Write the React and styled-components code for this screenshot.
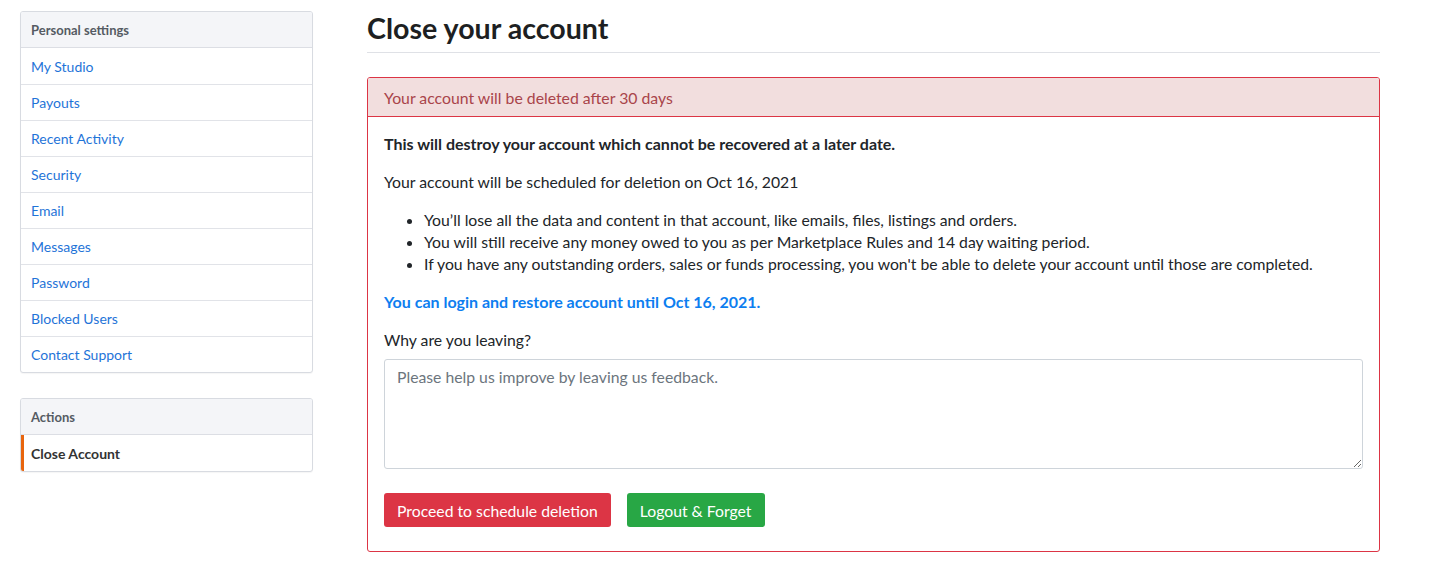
import React from "react";
import styled, { createGlobalStyle } from "styled-components";

const Global = createGlobalStyle`
  html, body { margin: 0; padding: 0; background: #fff; }
  body { font-family: Lato, "Open Sans", Arial, sans-serif; color: #212529; }
  * { box-sizing: border-box; }
`;

const Page = styled.div`
  display: flex;
  align-items: flex-start;
  padding: 11px 0 0 20px;
  gap: 54px;
`;

const Sidebar = styled.aside`
  width: 293px;
  display: flex;
  flex-direction: column;
  gap: 25px;
  flex-shrink: 0;
`;

const NavCard = styled.div`
  border: 1px solid #d8dbe1;
  border-radius: 3px;
  background: #fff;
  overflow: hidden;
  box-shadow: 0 1px 1px rgba(0,0,0,0.04);
`;

const NavHeader = styled.div`
  height: 36px;
  display: flex;
  align-items: center;
  padding: 0 10px;
  background: #f4f5f8;
  border-bottom: 1px solid #dcdee4;
  font-size: 13px;
  font-weight: 700;
  color: #555b63;
`;

const NavItem = styled.a`
  display: flex;
  align-items: center;
  height: 36px;
  padding: 0 10px;
  font-size: 14px;
  text-decoration: none;
  color: ${p => (p.$active ? "#333" : "#1f74d8")};
  font-weight: ${p => (p.$active ? 700 : 400)};
  border-left: ${p => (p.$active ? "3px solid #e8650e" : "0")};
  padding-left: ${p => (p.$active ? "7px" : "10px")};
  & + & { border-top: 1px solid #e1e3e8; }
`;

const Main = styled.main`
  width: 1013px;
`;

const Title = styled.h1`
  margin: 0;
  font-size: 28.6px;
  font-weight: 700;
  line-height: 34px;
  color: #1d1f22;
  padding-bottom: 7px;
  border-bottom: 1px solid #dfe1e6;
`;

const AlertCard = styled.section`
  margin-top: 24px;
  border: 1px solid #dc3545;
  border-radius: 3px;
  overflow: hidden;
`;

const AlertHeader = styled.div`
  height: 39px;
  display: flex;
  align-items: center;
  padding: 0 16px;
  background: #f2dede;
  border-bottom: 1px solid #dc3545;
  color: #a9444a;
  font-size: 15.8px;
`;

const AlertBody = styled.div`
  padding: 16px 16px 24px;
  font-size: 15.75px;
  line-height: 22px;
  color: #212529;
`;

const Para = styled.p`
  margin: 0 0 16px;
  font-size: ${p => (p.$bold ? "16px" : "inherit")};
  font-weight: ${p => (p.$bold ? 700 : 400)};
  color: ${p => (p.$tone === "link" ? "#0d7ef0" : "inherit")};
`;

const List = styled.ul`
  margin: 0 0 16px;
  padding-left: 40px;
`;

const Label = styled.label`
  display: block;
  margin-bottom: 8px;
`;

const Feedback = styled.textarea`
  display: block;
  width: 100%;
  height: 110px;
  padding: 6px 12px;
  border: 1px solid #ced4da;
  border-radius: 3px;
  font-family: inherit;
  font-size: 15.75px;
  line-height: 22px;
  color: #495057;
  resize: vertical;
  &::placeholder { color: #6c757d; }
`;

const Actions = styled.div`
  display: flex;
  gap: 16px;
  margin-top: 24px;
`;

const Button = styled.button`
  height: 34px;
  padding: 0 13px;
  border: 0;
  border-radius: 3px;
  font-family: inherit;
  font-size: 15.75px;
  color: #fff;
  background: ${p => (p.$variant === "danger" ? "#dc3545" : "#28a745")};
  cursor: pointer;
`;

const personal = [
  "My Studio",
  "Payouts",
  "Recent Activity",
  "Security",
  "Email",
  "Messages",
  "Password",
  "Blocked Users",
  "Contact Support",
];

export default function App() {
  return (
    <>
      <Global />
      <Page>
        <Sidebar>
          <NavCard>
            <NavHeader>Personal settings</NavHeader>
            {personal.map(item => (
              <NavItem key={item} href="#">{item}</NavItem>
            ))}
          </NavCard>
          <NavCard>
            <NavHeader>Actions</NavHeader>
            <NavItem href="#" $active>Close Account</NavItem>
          </NavCard>
        </Sidebar>
        <Main>
          <Title>Close your account</Title>
          <AlertCard>
            <AlertHeader>Your account will be deleted after 30 days</AlertHeader>
            <AlertBody>
              <Para $bold>This will destroy your account which cannot be recovered at a later date.</Para>
              <Para>Your account will be scheduled for deletion on Oct 16, 2021</Para>
              <List>
                <li>You’ll lose all the data and content in that account, like emails, files, listings and orders.</li>
                <li>You will still receive any money owed to you as per Marketplace Rules and 14 day waiting period.</li>
                <li>If you have any outstanding orders, sales or funds processing, you won't be able to delete your account until those are completed.</li>
              </List>
              <Para $bold $tone="link">You can login and restore account until Oct 16, 2021.</Para>
              <Label htmlFor="feedback">Why are you leaving?</Label>
              <Feedback id="feedback" placeholder="Please help us improve by leaving us feedback." />
              <Actions>
                <Button $variant="danger">Proceed to schedule deletion</Button>
                <Button $variant="success">Logout &amp; Forget</Button>
              </Actions>
            </AlertBody>
          </AlertCard>
        </Main>
      </Page>
    </>
  );
}
